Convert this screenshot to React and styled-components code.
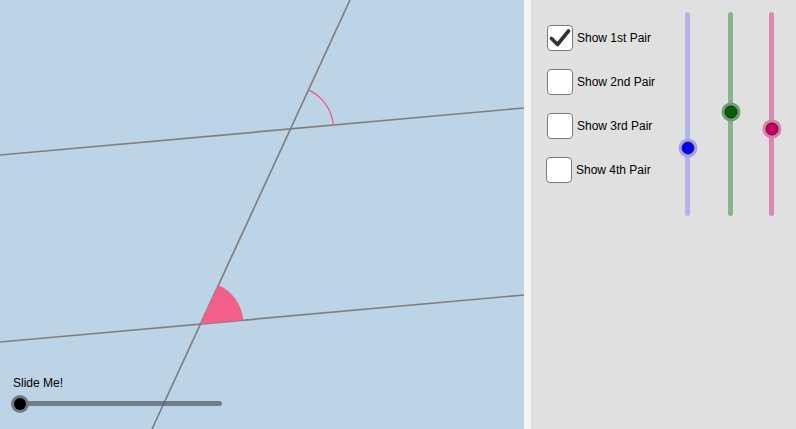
import styled, { createGlobalStyle } from "styled-components";

const Global = createGlobalStyle`
  html, body {
    margin: 0;
    padding: 0;
    overflow: hidden;
    font-family: "Liberation Sans", Arial, sans-serif;
  }
`;

const Page = styled.div`
  display: flex;
  width: 796px;
  height: 429px;
`;

const Canvas = styled.div`
  position: relative;
  width: 524px;
  height: 429px;
  background: #bdd4e7;
  overflow: hidden;
`;

const Divider = styled.div`
  width: 7px;
  background: #f4f4f4;
`;

const Panel = styled.div`
  flex: 1;
  display: flex;
  background: #e0e0e0;
  padding: 12px 0 0 16px;
`;

const Checks = styled.div`
  display: flex;
  flex-direction: column;
  gap: 18px;
  padding-top: 13px;
  width: 138px;
`;

const CheckRow = styled.label`
  display: flex;
  align-items: center;
  gap: 4px;
  font-size: 12px;
  color: #000;
  margin-left: ${(p) => p.$shift || 0}px;
`;

const Box = styled.span`
  width: 24px;
  height: 24px;
  border: 1px solid #7a7a7a;
  border-radius: 4px;
  background: #fff;
  display: flex;
  align-items: center;
  justify-content: center;
  box-sizing: content-box;
`;

const Sliders = styled.div`
  display: flex;
`;

const VTrack = styled.div`
  position: relative;
  width: 5px;
  height: 204px;
  border-radius: 3px;
  background: ${(p) => p.$track};
  margin-left: ${(p) => p.$gap}px;
`;

const VKnob = styled.span`
  position: absolute;
  left: 50%;
  width: 11px;
  height: 11px;
  border-radius: 50%;
  background: ${(p) => p.$color};
  border: 1px solid #222;
  box-shadow: 0 0 0 3px ${(p) => p.$halo};
  transform: translate(-50%, -50%);
`;

const SlideBox = styled.div`
  position: absolute;
  left: 13px;
  top: 376px;
  display: flex;
  flex-direction: column;
  gap: 11px;
`;

const SlideLabel = styled.span`
  font-size: 12px;
  color: #000;
`;

const HTrack = styled.div`
  position: relative;
  margin-left: 7px;
  width: 202px;
  height: 5px;
  border-radius: 3px;
  background: rgba(80, 90, 100, 0.7);
`;

const HKnob = styled.span`
  position: absolute;
  left: 0;
  top: 50%;
  width: 12px;
  height: 12px;
  border-radius: 50%;
  background: #000;
  box-shadow: 0 0 0 3px #6f7a82;
  transform: translate(-50%, -50%);
`;

const Check = () => (
  <svg width="22" height="20" viewBox="0 0 22 20">
    <path d="M2.5 10.5 L8.5 16.5 L19.5 3" fill="none" stroke="#333" strokeWidth="3.6" strokeLinecap="round" strokeLinejoin="round" />
  </svg>
);

const pairs = [
  { label: "Show 1st Pair", on: true },
  { label: "Show 2nd Pair" },
  { label: "Show 3rd Pair" },
  { label: "Show 4th Pair", shift: -1 },
];

const sliders = [
  { track: "#b4b4e8", color: "#0000ff", halo: "#a4a4f0", pos: 136, gap: 0 },
  { track: "#8cb48c", color: "#006400", halo: "#6f9a6f", pos: 100, gap: 38 },
  { track: "#d88ab2", color: "#cc0066", halo: "#e07aa8", pos: 117, gap: 36 },
];

const Sketch = () => (
  <svg width="524" height="429" viewBox="0 0 524 429">
    <g stroke="#808080" strokeWidth="1.7" fill="none">
      <line x1="350" y1="0" x2="152" y2="429" />
      <line x1="0" y1="155" x2="524" y2="108" />
      <line x1="0" y1="342" x2="524" y2="295" />
    </g>
    <path d="M200.5 324 L243.3 320.2 A43 43 0 0 0 218.5 284.9 Z" fill="#f2608a" />
    <path d="M308.5 89.9 A43 43 0 0 1 333.3 125.2" fill="none" stroke="#ee5a88" strokeWidth="1.2" />
  </svg>
);

export default function App() {
  return (
    <Page>
      <Global />
      <Canvas>
        <Sketch />
        <SlideBox>
          <SlideLabel>Slide Me!</SlideLabel>
          <HTrack>
            <HKnob />
          </HTrack>
        </SlideBox>
      </Canvas>
      <Divider />
      <Panel>
        <Checks>
          {pairs.map((p) => (
            <CheckRow key={p.label} $shift={p.shift}>
              <Box>{p.on && <Check />}</Box>
              {p.label}
            </CheckRow>
          ))}
        </Checks>
        <Sliders>
          {sliders.map((s, i) => (
            <VTrack key={i} $track={s.track} $gap={s.gap}>
              <VKnob $color={s.color} $halo={s.halo} style={{ top: s.pos }} />
            </VTrack>
          ))}
        </Sliders>
      </Panel>
    </Page>
  );
}
